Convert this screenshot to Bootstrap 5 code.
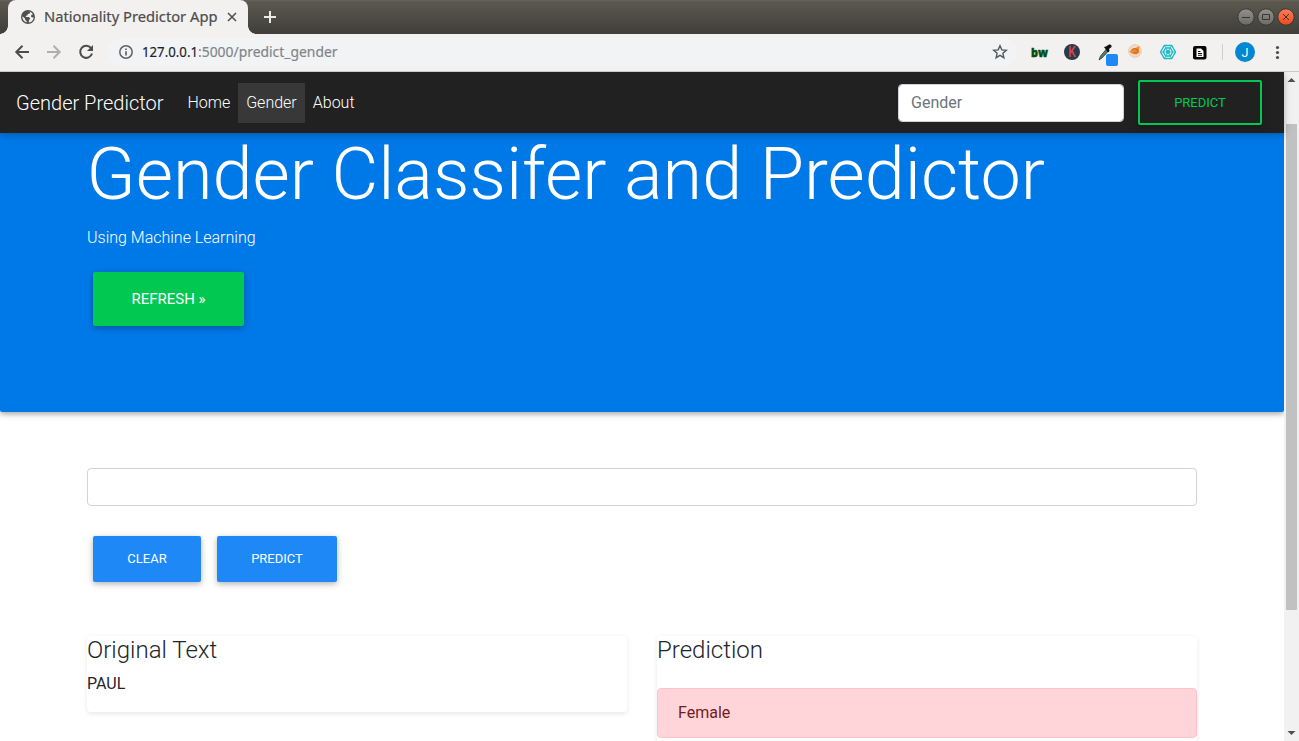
<!DOCTYPE html>
<html lang="en">
<head>
<meta charset="utf-8">
<title>Nationality Predictor App</title>
<link href="https://cdn.jsdelivr.net/npm/bootstrap@5.3.0/dist/css/bootstrap.min.css" rel="stylesheet">
<style>
  body { font-family: Roboto, "Liberation Sans", sans-serif; font-size: 16px; color: #212529; }
  .ui-font { font-family: "Noto Sans", "Open Sans", sans-serif; }
  .tabstrip { height: 34px; background: linear-gradient(#66645a 0, #5b594f 2px, #3f3e39 100%); }
  .tab-active { position: relative; width: 240px; height: 34px; margin-left: 8px; padding-left: 13px; background: #f2f1ef; border-radius: 8px 8px 0 0; }
  .tab-active::before, .tab-active::after { content: ""; position: absolute; bottom: 0; width: 8px; height: 8px; }
  .tab-active::before { left: -8px; background: radial-gradient(circle at 0 0, transparent 7.5px, #f2f1ef 8px); }
  .tab-active::after { right: -8px; background: radial-gradient(circle at 100% 0, transparent 7.5px, #f2f1ef 8px); }
  .tab-title { width: 175px; margin-left: 9px; }
  .tab-close { margin-left: 6px; }
  .new-tab { margin-left: 15px; }
  .toolbar { height: 38px; padding-bottom: 1px; background: #f2f1ef; border-bottom: 1px solid #c9c9c9; }
  .nav-icons { margin-left: 14px; }
  .omnibox { width: 909px; height: 28px; margin-left: 12px; padding: 0 9px 0 10px; border-radius: 14px; background: #f1f3f5; }
  .viewport-row { height: 669px; }
  .page { width: 1284px; }
  .topnav { height: 61px; padding: 0 22px 0 16px; background: #212121; font-weight: 300; box-shadow: 0 2px 5px rgba(0,0,0,.16), 0 2px 10px rgba(0,0,0,.12); z-index: 2; }
  .topnav .navbar-brand { font-size: 20px; margin-right: 16px; padding: 0; }
  .topnav .nav-link { color: #fff; padding: 8px; }
  .topnav .nav-item.current { background: #383838; }
  .page .form-control { height: 38px; border-color: #ced4da; border-radius: 4px; padding: 6px 12px; }
  .page .form-control::placeholder { color: #6c757d; }
  .nav-search { width: 226px; margin-right: 14px; }
  .btn-flat { border: 0; border-radius: 2px; text-transform: uppercase; color: #fff; font-size: 13px; line-height: 19.5px; box-shadow: 0 2px 5px rgba(0,0,0,.2), 0 2px 10px rgba(0,0,0,.12); }
  .btn-outline-green { width: 124px; height: 45px; border: 2px solid #00c851; color: #00c851; }
  .btn-green { width: 151px; height: 54px; margin-left: 6px; background: #00c851; font-size: 15px; line-height: 54px; }
  .btn-blue { height: 46px; background: #1e88f7; }
  .btn-clear { width: 108px; }
  .btn-predict { width: 120px; }
  .hero { height: 279px; background: #0079e8; color: #fff; font-weight: 300; border-radius: 0 0 2px 2px; box-shadow: 0 2px 5px rgba(0,0,0,.26), 0 2px 8px rgba(0,0,0,.12); }
  .page .container { --bs-gutter-x: 30px; max-width: 1140px; }
  .hero h1 { height: 83px; font-size: 72px; line-height: 83px; font-weight: 300; margin: 0 0 0 -.5px; letter-spacing: -.02px; white-space: nowrap; }
  .hero p { font-size: 16px; line-height: 24px; margin: 10px 0 22px; }
  .actions { margin: 30px 0 0 6px; }
  .results { --bs-gutter-x: 30px; margin-top: 54px; }
  .panel { border-radius: 4px; box-shadow: 0 1.5px 5px rgba(0,0,0,.09); }
  .panel-short { height: 76px; }
  .panel-tall { height: 130px; }
  .panel h4 { font-size: 24px; line-height: 29px; font-weight: 300; margin: 0 0 7px; }
  .alert-result { height: 50px; margin-top: 23px; padding: 12px 20px; color: #721c24; background: #ffd5d9; border: 1px solid #ffc3c8; border-radius: 4px; line-height: 24px; }
  .scroller { width: 15px; background: #f1f1f1; }
  .scroller .thumb { width: 11px; height: 486px; margin-top: 37px; background: #c1c1c1; }
</style>
</head>
<body class="overflow-hidden bg-white">

<div class="tabstrip ui-font d-flex align-items-center">
  <div class="tab-active d-flex align-items-center">
    <svg width="14" height="14" viewBox="0 0 14 14"><circle cx="7" cy="7" r="7" fill="#505050"/><path d="M6.800 1.500C9 1.300 9.600 2.600 8.600 3.500L6.600 4.300 6.400 5.500 4.900 5.800 4.800 6.900 7.800 7 9.300 8.400 8.300 9.800 7.600 12.500C10.800 12.500 12.600 9.900 12.600 7.300L11 7.600 9.800 6.200 10.600 4.700 12 4.400C11 2.500 9.300 1.500 6.800 1.500ZM1.400 6.200 4 8.600 4.200 10 5.600 10.900 5.600 12.400C2.700 11.600 1.200 9 1.400 6.200Z" fill="#f2f1ef"/></svg>
    <svg class="tab-title" height="34"><text x="0" y="22" textLength="173.500" lengthAdjust="spacingAndGlyphs" font-size="14.600" fill="#4c4c4c" stroke="#4c4c4c" stroke-width=".2">Nationality Predictor App</text></svg>
    <svg class="tab-close" width="14" height="14" viewBox="0 0 14 14" stroke="#505050" stroke-width="1.600"><path d="M3 3l8 8M11 3l-8 8"/></svg>
  </div>
  <svg class="new-tab" width="14" height="14" stroke="#eceae4" stroke-width="2"><path d="M1 7h12M7 1v12"/></svg>
  <svg class="ms-auto" width="64" height="20">
    <defs>
      <linearGradient id="wg" x2="0" y2="1"><stop stop-color="#91908a"/><stop offset="1" stop-color="#6d6b65"/></linearGradient>
      <linearGradient id="wr" x2="0" y2="1"><stop stop-color="#ff7d59"/><stop offset="1" stop-color="#ed4a1d"/></linearGradient>
    </defs>
    <g stroke="#383732"><circle cx="11" cy="10" r="8.200" fill="url(#wg)"/><circle cx="31" cy="10" r="8.200" fill="url(#wg)"/><circle cx="51" cy="10" r="8.200" fill="url(#wr)"/>
    <path d="M7 10.500h8M27.500 7.500h7v5h-7zM48 7l6 6M54 7l-6 6" fill="none"/></g>
  </svg>
</div>

<div class="toolbar d-flex align-items-center">
  <svg class="nav-icons" width="82" height="20" viewBox="0 0 82 20" fill="none" stroke-width="2">
    <path d="M15 10H2.500M8.500 3.800L2.300 10l6.200 6.200" stroke="#4c4c4c"/>
    <path d="M33 10H45.500M39.500 3.800l6.200 6.200-6.200 6.200" stroke="#b0afae"/>
    <path d="M77 6.200A6 6 0 1 0 78 11.500" stroke="#4c4c4c"/><path d="M79 3v6h-6z" fill="#4c4c4c"/>
  </svg>
  <div class="omnibox d-flex align-items-center">
    <svg width="16" height="16" fill="none" stroke="#5f6368"><circle cx="8" cy="8" r="6.200" stroke-width="1.500"/><path d="M8 7.200V11.500M8 4.400V6" stroke-width="1.700"/></svg>
    <svg class="ui-font ms-2" width="200" height="28" font-size="14.400"><text x="0" y="19" textLength="56" lengthAdjust="spacingAndGlyphs" fill="#202124" stroke="#202124" stroke-width=".15">127.0.0.1</text><text x="56" y="19" textLength="139.500" lengthAdjust="spacingAndGlyphs" fill="#7f8387" stroke="#7f8387" stroke-width=".15">:5000/predict_gender</text></svg>
    <svg class="ms-auto" width="16" height="16" viewBox="0 0 16 16"><path d="M8 1.800l1.800 4.100 4.500.4-3.400 3 1 4.400L8 11.400l-3.900 2.300 1-4.400-3.400-3 4.500-.4z" fill="none" stroke="#54585c" stroke-width="1.400"/></svg>
  </div>
  <svg class="ms-auto" width="274" height="36" viewBox="1025 34 274 36">
    <text x="1031" y="56.500" textLength="17" lengthAdjust="spacingAndGlyphs" font-family="Open Sans, sans-serif" font-size="12" font-weight="800" fill="#064b10" stroke="#064b10" stroke-width=".4">bw</text>
    <circle cx="1072" cy="52" r="8" fill="#263b4c"/><text x="1068.300" y="57" textLength="7.500" lengthAdjust="spacingAndGlyphs" font-family="Roboto" font-size="14" font-weight="500" fill="#e0434b">K</text>
    <path d="M1099 60l1.500-4 5.500-6.500 2 2-6 6.500z" fill="#507c62" stroke="#30423a" stroke-width=".8"/><path d="M1104 47l2-.5 3-2q3-.5 2.500 2.500l-2.500 2 .5 2-1.500 1.500z" fill="#111"/>
    <rect x="1106" y="54" width="12" height="12" rx="2" fill="#1e88f7"/>
    <circle cx="1135" cy="51" r="6.300" fill="#e8ddce" stroke="#efbe92" stroke-width=".8"/><path d="M1129.500 52l3-3.500 3-.5 4-2-.5 4 .5 2.500-3 2-3.500-.5z" fill="#f08a30"/><path d="M1131.500 50l3-1.500 3.500 1.500-1 2.500-3.500.5" stroke="#bb5b1f" fill="none" stroke-width=".8"/>
    <g fill="none" stroke="#19b9c8" stroke-width="1.300"><path d="M1164.300 45.500h7.400l3.800 6.500-3.800 6.500h-7.400l-3.800-6.500z"/><path d="M1165.700 48h4.600l2.500 4-2.500 4h-4.600l-2.500-4z"/><circle cx="1168" cy="52" r="1.500"/><path d="M1160.500 52h15M1164.300 45.500l7.400 13M1171.700 45.500l-7.400 13" stroke-width=".8"/></g>
    <rect x="1193" y="46" width="13.500" height="13.500" rx="2" fill="#050505"/><path d="M1196.500 48.500h4.500l2.500 2.500v6h-7z" fill="#fff"/><path d="M1198 51.500h2.500M1198 53.500h4M1198 55.300h4" stroke="#111"/>
    <path d="M1222.500 44v16" stroke="#cfcecc"/>
    <circle cx="1245" cy="52" r="10" fill="#0288d1"/><text x="1245" y="56.500" text-anchor="middle" font-family="Roboto" font-size="12.500" fill="#fff">J</text>
    <g fill="#4c4c4c"><circle cx="1277.500" cy="47.500" r="1.600"/><circle cx="1277.500" cy="52.500" r="1.600"/><circle cx="1277.500" cy="57.500" r="1.600"/></g>
  </svg>
</div>

<div class="viewport-row d-flex overflow-hidden">
  <main class="page flex-shrink-0">
    <nav class="topnav navbar navbar-expand navbar-dark position-relative">
      <a class="navbar-brand" href="#">Gender Predictor</a>
      <ul class="navbar-nav me-auto">
        <li class="nav-item"><a class="nav-link" href="#">Home</a></li>
        <li class="nav-item current"><a class="nav-link" href="#">Gender</a></li>
        <li class="nav-item"><a class="nav-link" href="#">About</a></li>
      </ul>
      <form class="d-flex align-items-center">
        <input class="form-control nav-search" type="text" placeholder="Gender">
        <button class="btn btn-flat btn-outline-green p-0" type="button">Predict</button>
      </form>
    </nav>

    <section class="hero">
      <div class="container">
        <h1>Gender Classifer and Predictor</h1>
        <p>Using Machine Learning</p>
        <a class="btn btn-flat btn-green d-flex justify-content-center p-0" href="#">Refresh »</a>
      </div>
    </section>

    <div class="container pt-5">
      <input class="form-control mt-2" type="text" aria-label="Name">
      <div class="d-flex gap-3 actions">
        <button class="btn btn-flat btn-blue btn-clear p-0" type="button">Clear</button>
        <button class="btn btn-flat btn-blue btn-predict p-0" type="button">Predict</button>
      </div>
      <div class="row results align-items-start">
        <div class="col-6"><div class="panel panel-short"><h4>Original Text</h4>PAUL</div></div>
        <div class="col-6"><div class="panel panel-tall"><h4>Prediction</h4><div class="alert-result">Female</div></div></div>
      </div>
    </div>
  </main>
  <aside class="scroller d-flex flex-column align-items-center">
    <svg class="flex-shrink-0" width="15" height="15"><path d="M7.500 6l4 4h-8z" fill="#505050"/></svg>
    <div class="thumb flex-shrink-0"></div>
    <svg class="mt-auto flex-shrink-0" width="15" height="15"><path d="M3.500 5h8l-4 4z" fill="#505050"/></svg>
  </aside>
</div>
<script src="https://cdn.jsdelivr.net/npm/bootstrap@5.3.0/dist/js/bootstrap.bundle.min.js"></script>
</body>
</html>
